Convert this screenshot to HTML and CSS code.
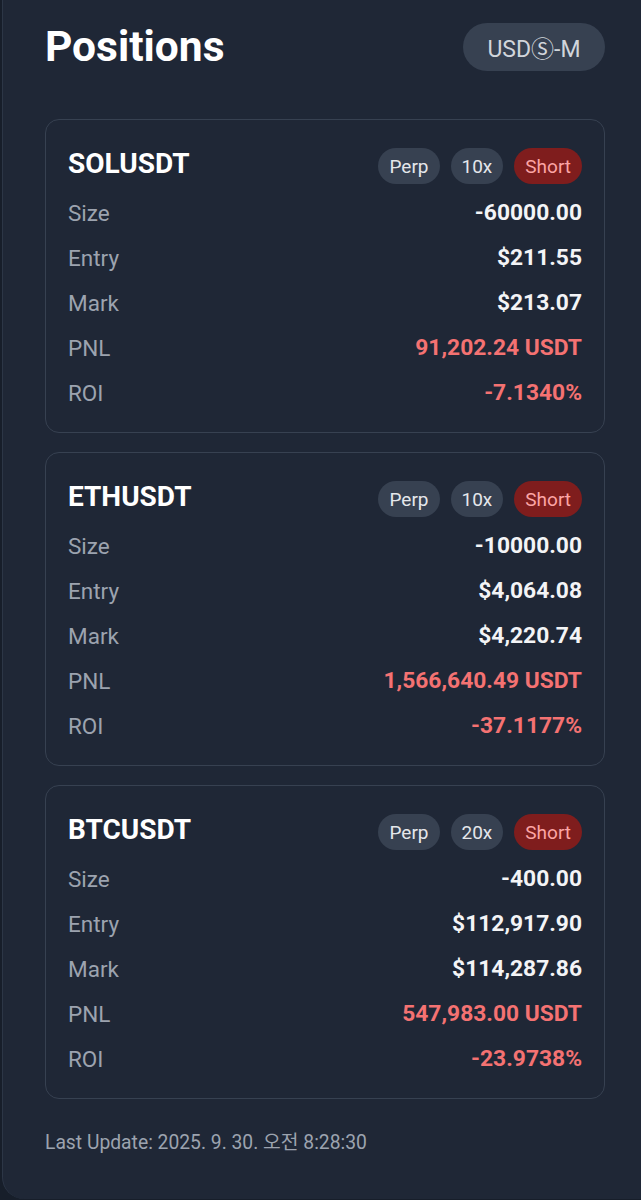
FILE: index.html
```html
<!DOCTYPE html>
<html lang="en">
<head>
<meta charset="utf-8">
<title>Positions</title>
<link rel="stylesheet" href="styles.css">
</head>
<body>
<div class="panel">
  <header class="top">
    <h1 class="title">Positions</h1>
    <div class="pill">USDⓈ-M</div>
  </header>

  <section class="cards">
    <article class="card">
      <div class="card-head">
        <span class="symbol">SOLUSDT</span>
        <div class="badges">
          <span class="badge">Perp</span>
          <span class="badge">10x</span>
          <span class="badge short">Short</span>
        </div>
      </div>
      <div class="rows">
        <div class="row"><span class="label">Size</span><span class="value">-60000.00</span></div>
        <div class="row"><span class="label">Entry</span><span class="value">$211.55</span></div>
        <div class="row"><span class="label">Mark</span><span class="value">$213.07</span></div>
        <div class="row"><span class="label">PNL</span><span class="value neg">91,202.24 USDT</span></div>
        <div class="row"><span class="label">ROI</span><span class="value neg">-7.1340%</span></div>
      </div>
    </article>

    <article class="card">
      <div class="card-head">
        <span class="symbol">ETHUSDT</span>
        <div class="badges">
          <span class="badge">Perp</span>
          <span class="badge">10x</span>
          <span class="badge short">Short</span>
        </div>
      </div>
      <div class="rows">
        <div class="row"><span class="label">Size</span><span class="value">-10000.00</span></div>
        <div class="row"><span class="label">Entry</span><span class="value">$4,064.08</span></div>
        <div class="row"><span class="label">Mark</span><span class="value">$4,220.74</span></div>
        <div class="row"><span class="label">PNL</span><span class="value neg">1,566,640.49 USDT</span></div>
        <div class="row"><span class="label">ROI</span><span class="value neg">-37.1177%</span></div>
      </div>
    </article>

    <article class="card">
      <div class="card-head">
        <span class="symbol">BTCUSDT</span>
        <div class="badges">
          <span class="badge">Perp</span>
          <span class="badge">20x</span>
          <span class="badge short">Short</span>
        </div>
      </div>
      <div class="rows">
        <div class="row"><span class="label">Size</span><span class="value">-400.00</span></div>
        <div class="row"><span class="label">Entry</span><span class="value">$112,917.90</span></div>
        <div class="row"><span class="label">Mark</span><span class="value">$114,287.86</span></div>
        <div class="row"><span class="label">PNL</span><span class="value neg">547,983.00 USDT</span></div>
        <div class="row"><span class="label">ROI</span><span class="value neg">-23.9738%</span></div>
      </div>
    </article>
  </section>

  <p class="updated">Last Update: 2025. 9. 30. 오전 8:28:30</p>
</div>
</body>
</html>
```

FILE: styles.css
```css
* { box-sizing: border-box; }

html, body {
  margin: 0;
  padding: 0;
  background: #171e2a;
}

body {
  font-family: Roboto, "Noto Sans CJK KR", "DejaVu Sans", sans-serif;
  color: #f3f4f6;
}

.panel {
  margin-left: 2px;
  min-height: 1199px;
  background: #1f2736;
  border-left: 1px solid #2c3646;
  border-bottom-left-radius: 22px;
  padding: 23px 36px 20px 42px;
}

.top {
  display: flex;
  align-items: center;
  justify-content: space-between;
  height: 48px;
}

.title {
  margin: 0;
  font-size: 42.5px;
  font-weight: 700;
  color: #ffffff;
  line-height: 48px;
}

.pill {
  height: 48px;
  width: 142px;
  border-radius: 24px;
  background: #374151;
  color: #d1d5db;
  font-size: 23px;
  display: flex;
  align-items: center;
  justify-content: center;
}

.cards {
  margin-top: 48px;
  display: flex;
  flex-direction: column;
  gap: 19px;
}

.card {
  border: 1px solid #374151;
  border-radius: 14px;
  padding: 28px 22px 17px 22px;
}

.card-head {
  display: flex;
  align-items: center;
  justify-content: space-between;
  height: 36px;
}

.symbol {
  font-size: 28px;
  font-weight: 700;
  color: #ffffff;
  position: relative;
  top: -3px;
}

.badges {
  display: flex;
  gap: 11px;
}

.badge {
  height: 36px;
  padding: 0 11px;
  border-radius: 18px;
  background: #374151;
  color: #e5e7eb;
  font-size: 19px;
  display: flex;
  align-items: center;
}

.badge.short {
  background: #7f1d1d;
  color: #fca5a5;
}

.rows {
  margin-top: 6px;
}

.row {
  display: flex;
  justify-content: space-between;
  align-items: center;
  height: 45px;
}

.label {
  font-size: 22.5px;
  color: #9ca3af;
}

.value {
  font-size: 22.8px;
  font-weight: 700;
  color: #f3f4f6;
}

.value.neg {
  color: #f47272;
}

.updated {
  margin: 32px 0 0 0;
  font-size: 19.3px;
  color: #9ca3af;
  line-height: 24px;
}
```
